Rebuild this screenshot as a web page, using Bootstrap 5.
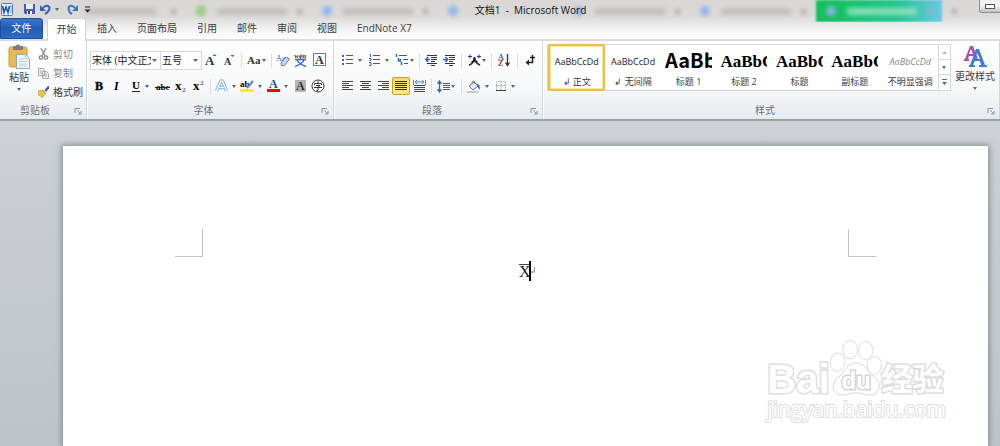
<!DOCTYPE html>
<html lang="zh-CN">
<head>
<meta charset="utf-8">
<meta name="viewport" content="width=device-width, initial-scale=1">
<title>文档1 - Microsoft Word</title>
<link href="https://cdn.jsdelivr.net/npm/bootstrap@5.3.0/dist/css/bootstrap.min.css" rel="stylesheet">
<style>
body{font:10px/14px "Open Sans","Noto Sans CJK SC",sans-serif;color:#3b3b3b;background:#c9cdd2;overflow-x:hidden}
button,select{font:inherit;color:inherit}
svg{display:block;flex:none}
svg text{font-family:"Liberation Serif",serif}
.app-head{background:linear-gradient(#dad7d5 0,#dcdad8 16px,#f4f3f3 30px,#fff 39px);height:41px;border-bottom:2px solid #dadddf}
.ghosts{inset:0;bottom:auto;height:22px;padding-left:60px;overflow:hidden}
.ghost{flex:0 0 126px;height:22px;padding:0 10px;color:#5b93ee}
.ghost i{filter:blur(2px)}
.g-dot{width:10px;height:10px;border-radius:5px;background:#8fb4ee}
.g-dot.ring{border:3px solid #7cc46c;background:#e8dfa0}
.g-bar{width:70px;height:7px;background:#c3c0be}
.g-x{width:5px;height:5px;background:#b0adab}
.ghost.on{background:linear-gradient(90deg,#12c05c 10%,#1fc792 65%,#6cc8e8);filter:blur(1px)}
.ghost.on .g-bar{background:#8be0b8}
.title-row{height:18px}
.ib{padding:0;border:0;background:none;display:flex;align-items:center;justify-content:center;gap:4px;height:18px;flex:none}
.s18{width:18px}.s20{width:20px}.s24{width:24px}.s27{width:27px}
.dd::after{content:"";border:2px solid transparent;border-top:3px solid #666;border-bottom:0}
.bar{width:6px;height:15px;flex:none;background:linear-gradient(#dadde1,#dadde1) center/1px 100% no-repeat}
.qat{width:92px;height:18px;gap:1px}
.doc-title{font-size:10px;color:#111}
.min-btn{width:21px;height:13px;border:1px solid #8b8f94;border-top:0;border-right:0;border-radius:0 0 0 3px;background:linear-gradient(#f2f2f2 50%,#bfc1c4);margin-left:10px;padding:0}
.tabs{height:21px}
.tabs .nav-link{padding:0;color:#3d3d3d;height:21px;line-height:21px;text-align:center;border-radius:3px 3px 0 0;white-space:nowrap}
.tabs .file{width:43px;background:linear-gradient(#3a76cb,#245bb4 50%,#2e6cc5);color:#fff;border:1px solid #1d4f9f;line-height:19px}
.tabs .active{width:39px;background:#fff;border:1px solid #cfd2d6;border-bottom:0;margin:0 11px 0 4px;height:23px}
.ribbon{background:linear-gradient(#fff,#f7f8f9 60%,#e7eaed);border-bottom:2px solid #9a9fa6;height:80px}
.grp{border-right:1px solid #d3d7dc;box-shadow:1px 0 #fff;height:78px;padding-top:3px;flex:none}
.g-clip{width:87px}.g-font{width:247px;padding-left:3px}.g-para{width:209px;padding-left:4px}
.grp-name{color:#68707c;height:16px;margin-top:auto}
.launch{width:8px;height:8px;padding:0;border:0;background:none;right:4px;bottom:4px}
.tool-row{height:18px;margin-top:7px}
.clip-row{height:19px;padding:0;gap:4px;justify-content:flex-start}
.box-select{appearance:none;height:19px;border:1px solid #d5d8dc;border-radius:0;background:#fff url("data:image/svg+xml,%3Csvg xmlns='http://www.w3.org/2000/svg' viewBox='0 0 5 3'%3E%3Cpath d='M0 0h5L2.5 3z' fill='%23666'/%3E%3C/svg%3E") right 3px center/5px 3px no-repeat;padding:0 9px 0 1px;color:#222;overflow:hidden}
.fam{width:71px}.siz{width:42px;margin-left:-1px}
.pressed{background:linear-gradient(#fbd86c,#ffe88a);border:1px solid #c99d2c;border-radius:2px}
.gallery{border:1px solid #d3d7dc;background:#fff;height:47px}
.sty{flex:1 1 0;min-width:0;border:0;background:none;padding:0 3px;height:45px;overflow:hidden;font-size:9px}
.sty.sel{border:2px solid #ecbf4b;border-radius:2px;box-shadow:inset 0 0 0 1px #fbe59b;height:47px;margin:-1px 0;flex-basis:2px;padding:0 2px}
.demo{height:29px;line-height:31px;white-space:nowrap;overflow:hidden;font-size:9px;color:#222;width:47px;margin:auto}
.demo.h1s{font:bold 20px/28px "Noto Sans CJK SC",sans-serif;color:#000}
.demo.srf{font:bold 17px/32px "Liberation Serif",serif;color:#000}
.demo.em{font-style:italic;color:#888}
.scr{width:12px;border-left:1px solid #d3d7dc}
.scr button{height:15px;width:11px;border-bottom:1px solid #d3d7dc}
.scr button:last-child{border:0}
.big{border:0;background:none;padding:0;font-size:10px}
.b-paste{width:38px}.b-style{width:48px}
.desk{padding:25px 12px 0 63px;background:linear-gradient(#cdd0d5,#bfc4cb);min-height:calc(100vh - 121px)}
.paper{background:#fff;padding:83px 112px 0;min-height:calc(100vh - 146px);box-shadow:0 0 6px 1px #7f858d}
.crop{width:28px;height:28px;border:0 solid #c3c3c3;border-bottom-width:1px}
.crop.l{border-right-width:1px}.crop.r{border-left-width:1px}
.eq{font:16px/14px "Liberation Serif",serif;color:#222;border-top:1px solid #444;height:15px;width:10px;text-align:center}
.caret{width:2px;height:20px;background:#000}
.wm{right:54px;top:337px;color:#fff;font-family:"Liberation Sans","Noto Sans CJK SC",sans-serif;font-weight:bold;-webkit-text-stroke:3px #dedede;paint-order:stroke fill}
.wm-top{height:60px}
.wm-top text{font:bold 25px "Liberation Sans",sans-serif}
.wm-bai{font-size:40px;line-height:36px}
.wm-cn{font-size:31px;line-height:34px}
.wm-url{font:21px/24px "Open Sans",sans-serif;-webkit-text-stroke:2px #dedede}
</style>
</head>
<body>
<svg width="0" height="0" class="position-absolute" aria-hidden="true">
<symbol id="launch" viewBox="0 0 8 8"><path d="M1 6V1.500h5M3.500 3.500l3 3M7 4v3H4" fill="none" stroke="#8d939b"/></symbol>
<symbol id="up" viewBox="0 0 5 3"><path d="M0 3h5L2.500 0z" fill="#b5b8bc"/></symbol>
</svg>
<header class="app-head position-relative">
  <div class="ghosts position-absolute d-flex" aria-hidden="true">
    <div class="ghost d-flex align-items-center justify-content-between"><i></i><i class="g-bar"></i><i class="g-x"></i></div>
    <div class="ghost d-flex align-items-center justify-content-between"><i class="g-dot ring"></i><i class="g-bar"></i><i class="g-x"></i></div>
    <div class="ghost d-flex align-items-center justify-content-between"><i class="g-dot"></i><i class="g-bar"></i><i class="g-x"></i></div>
    <div class="ghost d-flex align-items-center justify-content-between"><i class="g-dot"></i><i class="g-bar invisible"></i><i class="g-x invisible"></i></div>
    <div class="ghost d-flex align-items-center justify-content-between"><i class="g-dot"></i><i class="g-bar"></i><i class="g-x"></i></div>
    <div class="ghost d-flex align-items-center justify-content-between"><i class="g-dot"></i><i class="g-bar"></i><i class="g-x"></i></div>
    <div class="ghost on d-flex align-items-center justify-content-between"><i class="g-dot"></i><i class="g-bar"></i><i class="g-x"></i></div>
    <div class="ghost d-flex align-items-center"><i class="g-x"></i></div>
  </div>
  <div class="title-row d-flex position-relative">
    <div class="qat d-flex align-items-center">
      <button class="ib" aria-label="Word"><svg width="15" height="14" viewBox="0 0 15 14"><rect x="1.500" y="1.500" width="11" height="12" rx="1" fill="#e9f1fb" stroke="#4b7cc0"/><path d="M10 4h2M10 6h2M10 8h2M10 10h2" stroke="#7da4d8"/><path d="M2.500 4l1.500 6.500L6 5l2 5.500L9.500 4" fill="none" stroke="#1f55a8" stroke-width="1.600"/></svg></button>
      <span class="bar"></span>
      <button class="ib" aria-label="保存"><svg width="13" height="12" viewBox="0 0 13 12"><path d="M1 1h11v10H2L1 10z" fill="#5357b8"/><path d="M3 1h7v5H3z" fill="#e8eefb"/><path d="M4 8h5v3H4z" fill="#fff"/><path d="M5 8h2v3H5z" fill="#34387c"/></svg></button>
      <button class="ib s24 dd" aria-label="撤消"><svg width="11" height="11" viewBox="0 0 11 11"><path d="M3 4C6 0 11 2 9 6c-1 2-2 3-4 4" fill="none" stroke="#2f5fc0" stroke-width="2"/><path d="M0 1v6h6z" fill="#2f5fc0"/></svg></button>
      <button class="ib s20" aria-label="重复"><svg width="11" height="11" viewBox="0 0 11 11"><path d="M8 4C5 0 0 2 2 6c0 2 1 3 3 4" fill="none" stroke="#3a74c8" stroke-width="2"/><path d="M11 1v6H5z" fill="#3a74c8"/></svg></button>
      <button class="ib" aria-label="自定义快速访问工具栏"><svg width="8" height="7" viewBox="0 0 8 7"><path d="M2 1h5" stroke="#222"/><path d="M1.500 3.500h6L4.500 6.500z" fill="#222"/></svg></button>
    </div>
    <div class="doc-title flex-grow-1 text-center lh-lg">文档1&nbsp; -&nbsp; Microsoft Word</div>
    <button class="min-btn d-flex align-items-center justify-content-center" aria-label="最小化"><svg width="10" height="5"><rect x=".5" y=".5" width="9" height="4" fill="#fff" stroke="#555"/></svg></button>
  </div>
  <nav class="tabs nav flex-nowrap position-relative">
    <a class="nav-link file" href="#">文件</a>
    <a class="nav-link active" href="#" aria-current="page">开始</a>
    <a class="nav-link me-3" href="#">插入</a>
    <a class="nav-link ms-1 me-3" href="#">页面布局</a>
    <a class="nav-link ms-1 me-3" href="#">引用</a>
    <a class="nav-link ms-1 me-3" href="#">邮件</a>
    <a class="nav-link ms-1 me-3" href="#">审阅</a>
    <a class="nav-link ms-1 me-3" href="#">视图</a>
    <a class="nav-link ms-1" href="#">EndNote X7</a>
  </nav>
</header>
<section class="ribbon d-flex">
  <div class="grp g-clip d-flex flex-column position-relative">
    <div class="d-flex">
      <button class="big b-paste dd d-flex flex-column align-items-center"><svg width="22" height="26" viewBox="0 0 22 26"><rect x="1" y="3" width="18" height="20" rx="2" fill="#edb755" stroke="#d29a3c"/><path d="M5 2h3c0-2 4-2 4 0h3v4H5z" fill="#777d86"/><path d="M8.500 10.500h9l4 4v10h-13z" fill="#f3f7fc" stroke="#8aa6c8"/><path d="M17 10v5h5M11 15h5M11 17.500h8M11 20h8M11 22h8" fill="none" stroke="#b7cae2"/></svg><span class="mb-1">粘贴</span></button>
      <div>
        <button class="ib clip-row text-black-50"><svg width="11" height="12" viewBox="0 0 11 12"><path d="M3 0l4 8M8 0L4 8" stroke="#999" stroke-width="1.500"/><circle cx="3" cy="9.500" r="1.700" fill="none" stroke="#888" stroke-width="1.300"/><circle cx="8" cy="9.500" r="1.700" fill="none" stroke="#888" stroke-width="1.300"/></svg>剪切</button>
        <button class="ib clip-row text-black-50"><svg width="11" height="12" viewBox="0 0 11 12"><path d="M.5 1.500h5l1 1v6h-6zM4.500 4.500h4l2 2v5h-6z" fill="#eee" stroke="#aaa"/><path d="M6 7h3M6 9h3M2 4h2M2 6h2" stroke="#aaa"/></svg>复制</button>
        <button class="ib clip-row"><svg width="11" height="12" viewBox="0 0 12 12"><path d="M12 0L8 5" stroke="#4c5a9a" stroke-width="2.500"/><path d="M5 3l4 4-2 2-4-4z" fill="#aab2c8"/><path d="M0 5l4-1 4 4-3 4-2-1 1-2-3 1z" fill="#f0ca3b" stroke="#b08d22" stroke-width=".6"/></svg>格式刷</button>
      </div>
    </div>
    <div class="grp-name text-center pe-3">剪贴板</div>
    <button class="launch position-absolute" aria-label="剪贴板选项"><svg width="8" height="8"><use href="#launch"/></svg></button>
  </div>
  <div class="grp g-font d-flex flex-column position-relative">
    <div class="tool-row d-flex align-items-center">
      <select class="box-select fam" aria-label="字体"><option>宋体 (中文正文)</option></select>
      <select class="box-select siz" aria-label="字号"><option>五号</option></select>
      <button class="ib s18" aria-label="增大字体"><svg width="12" height="14" viewBox="0 0 12 14"><text x="0" y="12" font-size="13" font-weight="bold" fill="#333">A</text><path d="M7.500 3h4l-2-2z" fill="#2f63bd"/></svg></button>
      <button class="ib s18" aria-label="缩小字体"><svg width="12" height="14" viewBox="0 0 12 14"><text x="1" y="12" font-size="10" font-weight="bold" fill="#333">A</text><path d="M7.500 2h4l-2 2z" fill="#2f63bd"/></svg></button>
      <span class="bar"></span>
      <button class="ib s24 dd" aria-label="更改大小写" style="gap:1px"><svg width="14" height="14"><text x="0" y="11" font-size="11" font-weight="bold" fill="#333">Aa</text></svg></button>
      <span class="bar"></span>
      <button class="ib s18" aria-label="清除格式"><svg width="14" height="14" viewBox="0 0 14 14"><text x="0" y="8" font-size="8" fill="#3b64a8">Aa</text><path d="M5 10l5-6 3.500 2-5 6.500H5.500z" fill="#c4d8f2" stroke="#5b7fb5"/></svg></button>
      <button class="ib s18" aria-label="拼音指南"><svg width="16" height="16" viewBox="0 0 16 16"><text x="1" y="6" font-size="7" font-weight="bold" fill="#333">wén</text><path d="M2 7.500h11M7.500 6v1.500M4 8c2 4 5 5 9 6.500M11 8c-2 4-5 5-9 6.500" fill="none" stroke="#2f63bd" stroke-width="1.300"/></svg></button>
      <button class="ib s18" aria-label="字符边框"><svg width="14" height="14"><rect x="1.500" y=".5" width="12" height="12" fill="#fff" stroke="#5e7fae"/><text x="3" y="11" font-size="12" font-weight="bold" fill="#333">A</text></svg></button>
    </div>
    <div class="tool-row d-flex align-items-center mt-2">
      <button class="ib s18" aria-label="加粗"><svg width="10" height="14"><text x="1" y="11" font-size="12" font-weight="bold" stroke="#222" stroke-width=".5">B</text></svg></button>
      <button class="ib s18" aria-label="倾斜"><svg width="8" height="14"><text x="1" y="11" font-size="12" font-style="italic" font-weight="bold">I</text></svg></button>
      <button class="ib s27 dd" aria-label="下划线"><svg width="10" height="13"><text x="1" y="9" font-size="11" font-weight="bold">U</text><path d="M1 11.500h8" stroke="#222"/></svg></button>
      <button class="ib s18" aria-label="删除线"><svg width="15" height="12"><text x="1" y="10" font-size="9" font-weight="bold">abc</text><path d="M0 7.500h15" stroke="#222"/></svg></button>
      <button class="ib s18" aria-label="下标"><svg width="13" height="18"><text x="1" y="13" font-size="13" font-weight="bold">x</text><text x="8" y="15" font-size="7" font-weight="bold" fill="#2f63bd">2</text></svg></button>
      <button class="ib s18" aria-label="上标"><svg width="13" height="18"><text x="1" y="13" font-size="13" font-weight="bold">x</text><text x="8" y="8" font-size="7" font-weight="bold" fill="#2f63bd">2</text></svg></button>
      <span class="bar"></span>
      <button class="ib s24 dd" aria-label="文本效果"><svg width="13" height="14"><path d="M1.500 12L6 2h1.500L11.500 12M4 8.500h5" fill="none" stroke="#8fc1ea" stroke-width="3.500" stroke-linejoin="round"/><path d="M1.500 12L6 2h1.500L11.500 12M4 8.500h5" fill="none" stroke="#fff" stroke-width="1.200"/></svg></button>
      <button class="ib s27 dd" aria-label="突出显示"><svg width="14" height="16"><text x="0" y="9" font-size="9" font-weight="bold">ab</text><path d="M13 3L7 10" stroke="#6785b8" stroke-width="2"/><path d="M0 11h13v3H0z" fill="#fff200"/></svg></button>
      <button class="ib s27 dd" aria-label="字体颜色"><svg width="13" height="16"><text x="2" y="10" font-size="12" font-weight="bold" fill="#244f9e">A</text><path d="M0 11h13v3H0z" fill="#f00"/></svg></button>
      <button class="ib s18" aria-label="字符底纹"><svg width="11" height="14"><path d="M0 1h11v12H0z" fill="#b5b5b5"/><text x="1" y="11" font-size="12" font-weight="bold" fill="#333">A</text></svg></button>
      <button class="ib s18" aria-label="带圈字符"><svg width="14" height="14"><circle cx="7" cy="7" r="6" fill="#fff" stroke="#333"/><path d="M7 2v2M3.500 6V4.500h7V6M5 6.500h4L7 8v3.500H5.500M3 8.500h8" fill="none" stroke="#333"/></svg></button>
    </div>
    <div class="grp-name text-center pe-3">字体</div>
    <button class="launch position-absolute" aria-label="字体选项"><svg width="8" height="8"><use href="#launch"/></svg></button>
  </div>
  <div class="grp g-para d-flex flex-column position-relative">
    <div class="tool-row d-flex align-items-center">
      <button class="ib s27 dd" aria-label="项目符号"><svg width="12" height="12"><path d="M0 2h2M0 6h2M0 10h2" stroke="#2f63bd" stroke-width="2"/><path d="M4 1.500h7M4 5.500h7M4 9.500h7" stroke="#555"/></svg></button>
      <button class="ib s27 dd" aria-label="编号"><svg width="12" height="12"><path d="M1.500 0v3M0 4.500h2v2H.5M0 8.500h2v3H0" fill="none" stroke="#2f63bd"/><path d="M4 1.500h7M4 5.500h7M4 9.500h7" stroke="#555"/></svg></button>
      <button class="ib s24 dd" aria-label="多级列表" style="gap:1px"><svg width="14" height="12"><path d="M1.500 0v3M3.500 4v3h2V5M6.500 8v3" fill="none" stroke="#2f63bd" stroke-width="1.500"/><path d="M4 1.500h8M8 5.500h5M9 9.500h4" stroke="#555"/></svg></button>
      <span class="bar"></span>
      <button class="ib s18" aria-label="减少缩进"><svg width="13" height="12"><path d="M2 1.500h10M6 3.500h6M6 5.500h6M6 7.500h4M2 9.500h10M6 11.500h4" stroke="#333"/><path d="M5 5.500H1M3 3L.8 5.500 3 8" fill="none" stroke="#2f63bd" stroke-width="1.500"/></svg></button>
      <button class="ib s18" aria-label="增加缩进"><svg width="13" height="12"><path d="M2 1.500h10M6 3.500h6M6 5.500h6M6 7.500h4M2 9.500h10M6 11.500h4" stroke="#333"/><path d="M0 5.500h4M2.500 3l2.200 2.500L2.500 8" fill="none" stroke="#2f63bd" stroke-width="1.500"/></svg></button>
      <span class="bar"></span>
      <button class="ib s24 dd" aria-label="中文版式" style="gap:0"><svg width="15" height="12"><path d="M2 11C6 10 7 7 7.500 3 8 7 10 10 13 11M4.500 7.500h6" fill="none" stroke="#222" stroke-width="1.700"/><path d="M1 2.500h4M3 .5v4M10 2.500h4M12 .5v4" stroke="#2438a8"/></svg></button>
      <span class="bar"></span>
      <button class="ib s20" aria-label="排序"><svg width="13" height="16"><text x="0" y="8" font-size="8" font-weight="bold" fill="#2f63bd">A</text><text x="0" y="14" font-size="8" font-weight="bold" fill="#b03038">Z</text><path d="M9.500 2v11M7.500 10.500l2 3 2-3" fill="none" stroke="#333" stroke-width="1.300"/></svg></button>
      <span class="bar"></span>
      <button class="ib s20" aria-label="显示编辑标记"><svg width="10" height="12"><path d="M7.500 1v7.500H3M5 3.500h5" fill="none" stroke="#222" stroke-width="1.500"/><path d="M4 5.500v6L.5 8.500z" fill="#222"/></svg></button>
    </div>
    <div class="tool-row d-flex align-items-center mt-2">
      <button class="ib s18" aria-label="左对齐"><svg width="11" height="10"><path d="M0 .5h11M0 2.500h7M0 4.500h11M0 6.500h7M0 8.500h11" stroke="#444" stroke-width="1.200"/></svg></button>
      <button class="ib s18" aria-label="居中"><svg width="11" height="10"><path d="M0 .5h11M2 2.500h7M0 4.500h11M2 6.500h7M0 8.500h11" stroke="#444" stroke-width="1.200"/></svg></button>
      <button class="ib s18" aria-label="右对齐"><svg width="11" height="10"><path d="M0 .5h11M4 2.500h7M0 4.500h11M4 6.500h7M0 8.500h11" stroke="#444" stroke-width="1.200"/></svg></button>
      <button class="ib s18 pressed" aria-label="两端对齐"><svg width="12" height="10"><path d="M0 .5h12M0 2.500h12M0 4.500h12M0 6.500h12M0 8.500h12" stroke="#3a3212" stroke-width="1.200"/></svg></button>
      <button class="ib s18" aria-label="分散对齐"><svg width="13" height="13"><path d="M.5 0v5M12.500 0v5M2 2h9M4 0L2 2l2 2M9 0l2 2-2 2" fill="none" stroke="#4f7fc8"/><path d="M1 5.500h11M1 7.500h11M1 9.500h11M1 11.500h11" stroke="#444"/></svg></button>
      <span class="bar"></span>
      <button class="ib s24 dd" aria-label="行距" style="gap:1px"><svg width="13" height="13"><path d="M2.500 1v11M.5 4l2-3 2 3M.5 9l2 3 2-3" fill="none" stroke="#2f63bd" stroke-width="1.300"/><path d="M6 3.500h7M6 5.500h7M6 7.500h7M6 9.500h7" stroke="#555"/></svg></button>
      <span class="bar"></span>
      <button class="ib s27 dd" aria-label="底纹"><svg width="14" height="13"><path d="M2 6l5-4 4 4-5 4z" fill="#e7edf6" stroke="#5c6f92"/><path d="M5 4c0-4 3-4 3 0" fill="none" stroke="#5c6f92"/><path d="M10 4c3 0 3 3 2.500 6-1-1-1.500-3-2.500-4z" fill="#3568b8"/><path d="M0 11h12v2H0z" fill="#ccc"/></svg></button>
      <button class="ib s27 dd" aria-label="边框"><svg width="12" height="12"><path d="M1.500 10V1.500h9V10M6 1v9M1 5.500h10" fill="none" stroke="#aaa" stroke-dasharray="1.500 1"/><path d="M1 10.500h10" stroke="#444"/></svg></button>
    </div>
    <div class="grp-name text-center pe-3">段落</div>
    <button class="launch position-absolute" aria-label="段落选项"><svg width="8" height="8"><use href="#launch"/></svg></button>
  </div>
  <div class="grp d-flex flex-column position-relative flex-fill ps-1">
    <div class="d-flex">
      <div class="gallery d-flex flex-fill">
        <button class="sty sel"><div class="demo">AaBbCcDd</div>↲ 正文</button>
        <button class="sty"><div class="demo">AaBbCcDd</div>↲ 无间隔</button>
        <button class="sty"><div class="demo h1s">AaBb</div>标题 1</button>
        <button class="sty"><div class="demo srf">AaBbC</div>标题 2</button>
        <button class="sty"><div class="demo srf">AaBbC</div>标题</button>
        <button class="sty"><div class="demo srf">AaBbC</div>副标题</button>
        <button class="sty"><div class="demo em">AaBbCcDd</div>不明显强调</button>
        <div class="scr">
          <button class="ib" aria-label="向上"><svg width="5" height="3"><use href="#up"/></svg></button>
          <button class="ib dd" aria-label="向下"></button>
          <button class="ib" aria-label="其他"><svg width="7" height="7"><path d="M1 .5h5" stroke="#666"/><path d="M1 3h5L3.500 6z" fill="#666"/></svg></button>
        </div>
      </div>
      <button class="big b-style dd d-flex flex-column align-items-center"><svg width="24" height="25" viewBox="0 0 24 25"><path fill-rule="evenodd" d="M7 2h3l5 13h2v2h-6v-2h1l-1-3H6l-1 3h1v2H1v-2h1zM8 5l-2 5h4z" fill="#b04fb8"/><path fill-rule="evenodd" d="M13 5h3l6 16h2v2h-8v-2h2l-1-4h-5l-2 4h2v2H6v-2h1zM14 9l-2 6h5z" fill="#3f7fd6"/></svg><span class="mb-1">更改样式</span></button>
    </div>
    <div class="grp-name text-center pe-3">样式</div>
    <button class="launch position-absolute" aria-label="样式选项"><svg width="8" height="8"><use href="#launch"/></svg></button>
  </div>
</section>
<main class="desk">
  <article class="paper">
    <div class="d-flex justify-content-between"><span class="crop l"></span><span class="crop r"></span></div>
    <div class="d-flex justify-content-center align-items-center ms-1 pt-1"><span class="eq">X</span><span class="caret"></span><svg width="5" height="8"><path d="M3.500 0v5H0M2 3.500L.5 5 2 6.500" fill="none" stroke="#999"/></svg></div>
  </article>
</main>
<div class="wm position-absolute">
  <div class="wm-top d-flex align-items-end">
    <span class="wm-bai">Bai</span>
    <svg width="52" height="60" viewBox="0 0 54 60"><g fill="#fff" stroke="#dedede" stroke-width="2"><ellipse cx="8" cy="25" rx="7" ry="9"/><ellipse cx="21" cy="12" rx="7" ry="9"/><ellipse cx="37" cy="13" rx="7" ry="9"/><ellipse cx="46" cy="28" rx="7" ry="9"/><path d="M27 26C18 26 16 36 8 42-1 51 6 61 17 58c7-2 13-2 20 0 12 3 18-7 10-16-8-6-10-16-20-16z"/></g><text x="12" y="53" fill="#fff" stroke="#d4d4d4" stroke-width="3">du</text></svg>
    <span class="wm-cn">经验</span>
  </div>
  <div class="wm-url">jingyan.baidu.com</div>
</div>
<script src="https://cdn.jsdelivr.net/npm/bootstrap@5.3.0/dist/js/bootstrap.bundle.min.js"></script>
</body>
</html>
